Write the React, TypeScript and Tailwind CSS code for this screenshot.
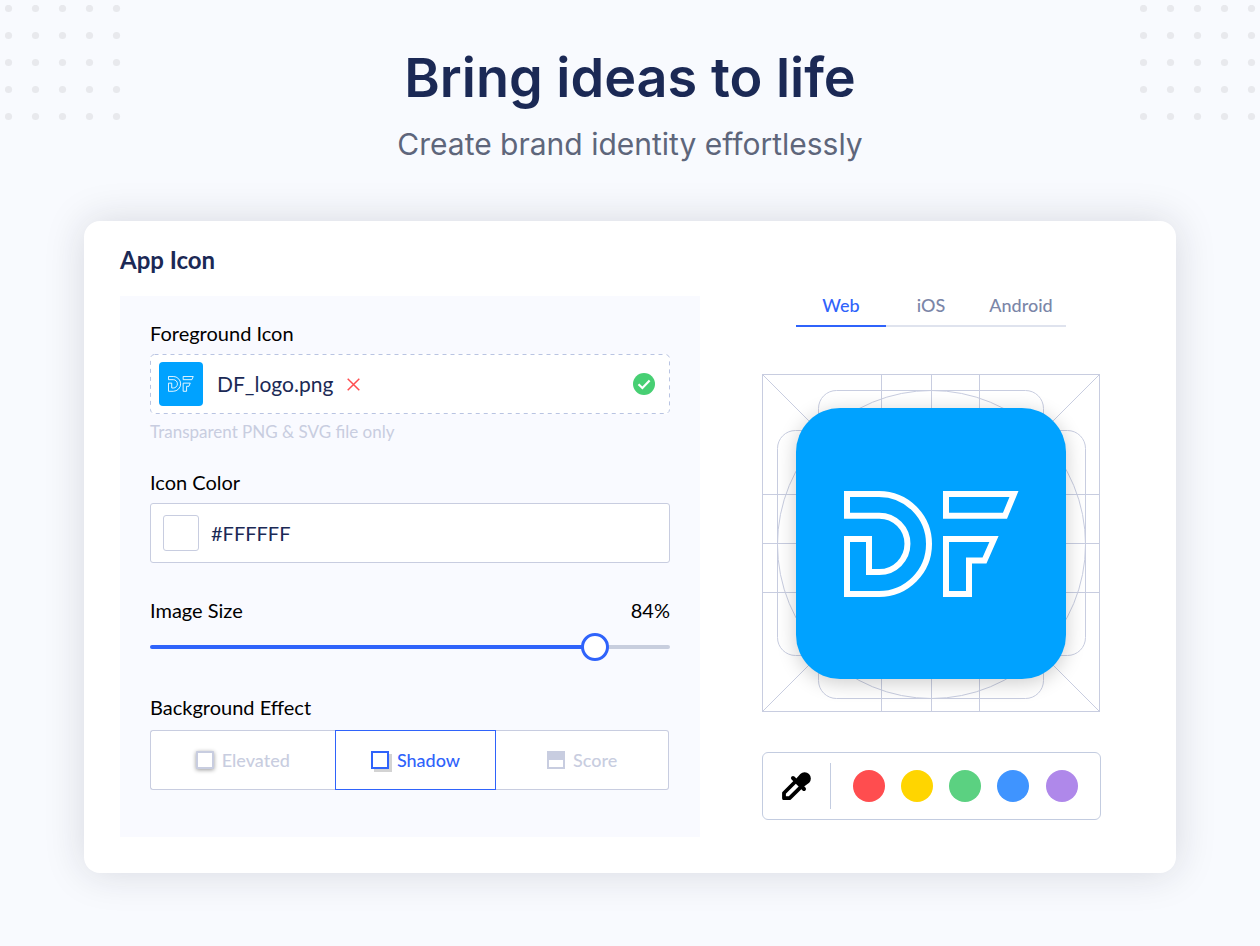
import { useState, type CSSProperties } from "react";

const TABS = ["Web", "iOS", "Android"];

const SWATCHES = [
  { name: "Red", className: "bg-[#ff4d4f]" },
  { name: "Yellow", className: "bg-[#ffd500]" },
  { name: "Green", className: "bg-[#5bd181]" },
  { name: "Blue", className: "bg-[#3f94ff]" },
  { name: "Purple", className: "bg-[#af88ea]" },
];

const MAX_SIZE = 96;

function LogoMark({ className }: { className: string }) {
  return (
    <svg viewBox="0 0 175 106" className={className} fill="none" stroke="#fff" strokeWidth="6" aria-hidden="true">
      <path d="M3 3H35A50 50 0 0 1 35 103H3V48H25V81H35.3A28.15 28.15 0 0 0 35.3 24.7H3Z" />
      <path d="M102 3H170L161 24.7H102Z" />
      <path d="M102 48H150L140.5 69.5H125V103H102Z" />
    </svg>
  );
}

function DotGrid() {
  return (
    <svg width="116" height="116" viewBox="0 0 116 116" fill="#e8e9ed" aria-hidden="true">
      {[0, 1, 2, 3, 4].map((row) =>
        [0, 1, 2, 3, 4].map((col) => <circle key={`${row}-${col}`} cx={3.5 + col * 27} cy={3.5 + row * 27} r="3.6" />),
      )}
    </svg>
  );
}

function Keylines() {
  return (
    <svg
      viewBox="0 0 338 338"
      className="col-start-1 row-start-1 h-full w-full"
      fill="none"
      stroke="#c8cde0"
      aria-hidden="true"
    >
      <rect x="0.5" y="0.5" width="337" height="337" />
      <path d="M0.5 0.5L337.5 337.5M337.5 0.5L0.5 337.5" />
      <path d="M119.5 0V338M169.5 0V338M217.5 0V338M0 120.5H338M0 169.5H338M0 218.5H338" />
      <rect x="56.5" y="16.5" width="225" height="308" rx="18" />
      <rect x="15.5" y="56.5" width="308" height="225" rx="18" />
      <circle cx="169.5" cy="170.5" r="154" />
    </svg>
  );
}

function Eyedropper() {
  return (
    <svg width="29" height="28" viewBox="0 0 29 28" aria-hidden="true">
      <path d="M13.5 9.5L2 21V26.2H7.6L19 14.8" fill="none" stroke="#000" strokeWidth="3.8" strokeLinejoin="round" />
      <path d="M11 6L22 17" stroke="#000" strokeWidth="4" strokeLinecap="round" />
      <path d="M13 8L18.3 1.9A6.3 6.3 0 0 1 27.2 10.8L20 16Z" fill="#000" />
    </svg>
  );
}

function ElevatedIcon() {
  return <span className="size-[18px] rounded-[1px] border-2 border-[#c8cde0] bg-white shadow-[0_1px_4px_rgba(0,0,0,0.4)]" />;
}

function ShadowIcon() {
  return <span className="size-[18px] border-2 border-[#2f63fb] bg-white shadow-[3px_3px_0_#d3d3d3]" />;
}

function ScoreIcon() {
  return <span className="size-[18px] border-2 border-t-9 border-[#c8cde0] bg-white" />;
}

const EFFECTS = [
  { name: "Elevated", Icon: ElevatedIcon, className: "flex-[185] rounded-l-[3px] border-r-0" },
  { name: "Shadow", Icon: ShadowIcon, className: "flex-[161]" },
  { name: "Score", Icon: ScoreIcon, className: "flex-[173] rounded-r-[3px] border-l-0" },
];

export default function App() {
  const [tab, setTab] = useState("Web");
  const [effect, setEffect] = useState("Shadow");
  const [color, setColor] = useState("#FFFFFF");
  const [size, setSize] = useState(84);
  const fill = { "--fill": `${(size / MAX_SIZE) * 100}%` } as CSSProperties;

  return (
    <div className="relative min-h-screen bg-[#f8fafe] px-[84px] pt-[46px] pb-[73px] font-['Lato',sans-serif] text-black">
      <div className="absolute top-[5px] left-[5px]">
        <DotGrid />
      </div>
      <div className="absolute top-[5px] right-1">
        <DotGrid />
      </div>

      <header className="text-center font-['Inter',sans-serif]">
        <h1 className="text-[54px] leading-[64px] font-semibold text-[#1b2955]">Bring ideas to life</h1>
        <p className="mt-4 text-[30px] leading-9 text-[#5e667b]">Create brand identity effortlessly</p>
      </header>

      <main className="mt-[59px] rounded-2xl bg-white px-9 pt-[25px] pb-9 shadow-[0_0_40px_rgba(30,30,50,0.15)]">
        <h2 className="text-2xl leading-7 font-bold text-[#1b2955]">App Icon</h2>

        <div className="mt-[22px] grid grid-cols-[580fr_418fr] gap-[22px]">
          <section className="bg-[#f9faff] px-[30px] pt-[23px] pb-[47px] text-xl leading-7">
            <h3>Foreground Icon</h3>
            <div className="relative mt-[7px] flex h-[60px] items-center rounded-[4px] bg-white pr-[15px] pl-[9px]">
              <svg className="absolute inset-0 h-full w-full" fill="none" aria-hidden="true">
                <rect
                  x="0.5"
                  y="0.5"
                  rx="4"
                  stroke="#b9c4e2"
                  strokeDasharray="4 4"
                  className="h-[calc(100%-1px)] w-[calc(100%-1px)]"
                />
              </svg>
              <span className="flex size-11 items-center justify-center rounded-[4px] bg-[#00a2ff]">
                <LogoMark className="w-[26px]" />
              </span>
              <span className="ml-3.5 text-[21px] text-[#1b2955]">DF_logo.png</span>
              <button type="button" aria-label="Remove file" className="relative ml-3.5">
                <svg width="13" height="13" viewBox="0 0 13 13" stroke="#ff4d4f" strokeWidth="1.5" aria-hidden="true">
                  <path d="M0.7 0.7L12.3 12.3M12.3 0.7L0.7 12.3" />
                </svg>
              </button>
              <svg className="ml-auto" width="22" height="22" viewBox="0 0 22 22" fill="none" aria-hidden="true">
                <circle cx="11" cy="11" r="11" fill="#47cf73" />
                <path d="M5.5 11.2L9.4 15L16.6 7.4" stroke="#fff" strokeWidth="2.2" />
              </svg>
            </div>
            <p className="mt-1.5 text-[17px] leading-6 text-[#c8cde0]">Transparent PNG &amp; SVG file only</p>

            <label htmlFor="icon-color" className="mt-6 block">
              Icon Color
            </label>
            <div className="mt-[7px] flex h-[60px] items-center gap-3 rounded-[3px] border border-[#c8cde0] bg-white px-3">
              <span className="size-9 shrink-0 rounded-[3px] border border-[#c8cde0]" style={{ backgroundColor: color }} />
              <input
                id="icon-color"
                type="text"
                value={color}
                onChange={(e) => setColor(e.target.value)}
                className="min-w-0 flex-1 bg-transparent text-[#1b2955] outline-none"
              />
            </div>

            <div className="mt-[33px] flex justify-between">
              <label htmlFor="image-size">Image Size</label>
              <output htmlFor="image-size">{size}%</output>
            </div>
            <input
              id="image-size"
              type="range"
              min={0}
              max={MAX_SIZE}
              value={size}
              onChange={(e) => setSize(Number(e.target.value))}
              style={fill}
              className="mt-[9px] block h-7 w-full cursor-pointer appearance-none bg-transparent [&::-webkit-slider-runnable-track]:h-1 [&::-webkit-slider-runnable-track]:rounded-full [&::-webkit-slider-runnable-track]:bg-[linear-gradient(to_right,#2f63fb_var(--fill),#c8cede_var(--fill))] [&::-webkit-slider-thumb]:-mt-3 [&::-webkit-slider-thumb]:size-7 [&::-webkit-slider-thumb]:appearance-none [&::-webkit-slider-thumb]:rounded-full [&::-webkit-slider-thumb]:border-3 [&::-webkit-slider-thumb]:border-solid [&::-webkit-slider-thumb]:border-[#2f63fb] [&::-webkit-slider-thumb]:bg-white"
            />

            <h3 className="mt-8">Background Effect</h3>
            <div className="mt-[9px] mr-px flex h-[60px] text-lg">
              {EFFECTS.map(({ name, Icon, className }) => (
                <button
                  key={name}
                  type="button"
                  aria-pressed={effect === name}
                  onClick={() => setEffect(name)}
                  className={`flex items-center justify-center gap-2 border bg-white font-medium ${className} ${
                    effect === name ? "border-[#2f63fb] text-[#2f63fb]" : "border-[#c8cde0] text-[#c8cde0]"
                  }`}
                >
                  <Icon />
                  {name}
                </button>
              ))}
            </div>
          </section>

          <section className="flex flex-col items-center">
            <div role="tablist" className="grid w-[270px] grid-cols-3 text-lg leading-[18px] font-medium">
              {TABS.map((name) => (
                <button
                  key={name}
                  type="button"
                  role="tab"
                  aria-selected={tab === name}
                  onClick={() => setTab(name)}
                  className={`border-b-2 pb-[11px] ${
                    tab === name ? "border-[#2f63fb] text-[#2f63fb]" : "border-[#dfe3ee] text-[#7b86a8]"
                  }`}
                >
                  {name}
                </button>
              ))}
            </div>

            <div className="mt-[47px] grid size-[338px] place-items-center">
              <Keylines />
              <div className="z-10 col-start-1 row-start-1 mt-[34px] flex h-[271px] w-[270px] items-center justify-center self-start rounded-[44px] bg-[#00a2ff] shadow-[0_4px_20px_rgba(0,0,0,0.2)]">
                <LogoMark className="w-[175px]" />
              </div>
            </div>

            <div className="mt-10 flex h-[68px] w-[339px] items-center rounded-md border border-[#c3cce0] pr-[22px] pl-[19px]">
              <button type="button" aria-label="Pick a color">
                <Eyedropper />
              </button>
              <span className="ml-[19px] h-[46px] w-px bg-[#c3cce0]" />
              <div className="ml-[22px] flex flex-1 justify-between">
                {SWATCHES.map((swatch) => (
                  <button
                    key={swatch.name}
                    type="button"
                    aria-label={swatch.name}
                    className={`size-8 rounded-full ${swatch.className}`}
                  />
                ))}
              </div>
            </div>
          </section>
        </div>
      </main>
    </div>
  );
}
